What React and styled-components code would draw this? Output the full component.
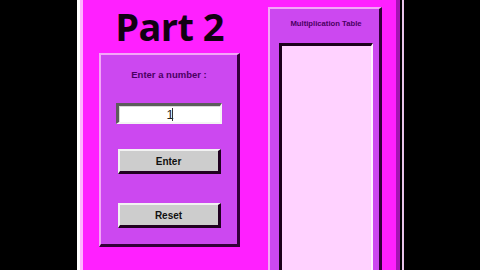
import React from "react";
import styled, { createGlobalStyle } from "styled-components";

const GlobalStyle = createGlobalStyle`
  html, body {
    margin: 0;
    padding: 0;
    background: #000;
  }
  * {
    box-sizing: border-box;
  }
`;

const Stage = styled.div`
  width: 480px;
  height: 270px;
  overflow: hidden;
  background: #000;
  display: flex;
  padding-left: 77px;
`;

const Window = styled.div`
  width: 327px;
  height: 100%;
  display: flex;
  background: #000;
  border-left: 3px solid #ffffff;
  border-right: 2px solid #e8c4ea;
  padding-right: 2px;
`;

const Surface = styled.div`
  flex: 1;
  display: flex;
  align-items: flex-start;
  gap: 28px;
  padding: 0 14px 0 16px;
  background: #ff20ff;
  border-left: 3px solid #ffb4ff;
  border-right: 4px solid #a414b4;
`;

const LeftColumn = styled.div`
  width: 141px;
  display: flex;
  flex-direction: column;
`;

const Heading = styled.h1`
  margin: 0;
  height: 53px;
  font-family: "Open Sans", "Liberation Sans", sans-serif;
  font-weight: 700;
  font-size: 38px;
  line-height: normal;
  color: #120012;
  text-align: center;
  letter-spacing: -0.6px;
`;

const Panel = styled.div`
  display: flex;
  flex-direction: column;
  align-items: center;
  background: #cc48f0;
  border-top: 2px solid #f4a6f8;
  border-left: 2px solid #f4a6f8;
  border-right: 3px solid #34003a;
  border-bottom: 3px solid #34003a;
`;

const InputPanel = styled(Panel)`
  height: 194px;
  padding-top: 14px;
`;

const Label = styled.div`
  font-family: "Liberation Sans", Arial, sans-serif;
  font-weight: 700;
  font-size: ${(p) => p.$size || 9.5}px;
  line-height: 12px;
  color: #4a0062;
  white-space: nowrap;
`;

const NumberBox = styled.div`
  margin-top: 22px;
  width: 106px;
  height: 21px;
  background: #ffffff;
  border-top: 3px solid #5c5c5c;
  border-left: 3px solid #5c5c5c;
  border-right: 2px solid #f4f4f4;
  border-bottom: 2px solid #f4f4f4;
  box-shadow: inset 1px 1px 0 #d8d8d8;
  display: flex;
  align-items: center;
  justify-content: center;
  font-family: "Liberation Sans", Arial, sans-serif;
  font-size: 13px;
  color: #222;
`;

const Caret = styled.span`
  display: inline-block;
  width: 1px;
  height: 13px;
  background: #333;
  margin-left: -2px;
`;

const Button = styled.button`
  margin-top: ${(p) => p.$top}px;
  width: 103px;
  height: 25px;
  padding: 0;
  background: #cdcdcd;
  border-top: 2px solid #f2f2f2;
  border-left: 2px solid #f2f2f2;
  border-right: 3px solid #200020;
  border-bottom: 3px solid #200020;
  font-family: "Liberation Sans", Arial, sans-serif;
  font-weight: 700;
  font-size: 10px;
  color: #111;
  cursor: pointer;
`;

const TablePanel = styled(Panel)`
  margin-top: 7px;
  width: 114px;
  height: 290px;
  padding: 10px 6px 0 9px;
  align-items: stretch;
`;

const TableTitle = styled(Label)`
  text-align: center;
  line-height: 10px;
  margin-bottom: 14px;
`;

const ListBox = styled.div`
  flex: 1;
  background: #ffd2ff;
  border-top: 3px solid #1c001c;
  border-left: 3px solid #1c001c;
  border-right: 2px solid #fff4ff;
  border-bottom: 2px solid #fff4ff;
`;

export default function App() {
  return (
    <>
      <GlobalStyle />
      <Stage>
        <Window>
          <Surface>
            <LeftColumn>
              <Heading>Part 2</Heading>
              <InputPanel>
                <Label>Enter a number :</Label>
                <NumberBox>
                  1<Caret />
                </NumberBox>
                <Button $top={25}>Enter</Button>
                <Button $top={29}>Reset</Button>
              </InputPanel>
            </LeftColumn>
            <TablePanel>
              <TableTitle $size={7.7}>Multiplication Table</TableTitle>
              <ListBox />
            </TablePanel>
          </Surface>
        </Window>
      </Stage>
    </>
  );
}
